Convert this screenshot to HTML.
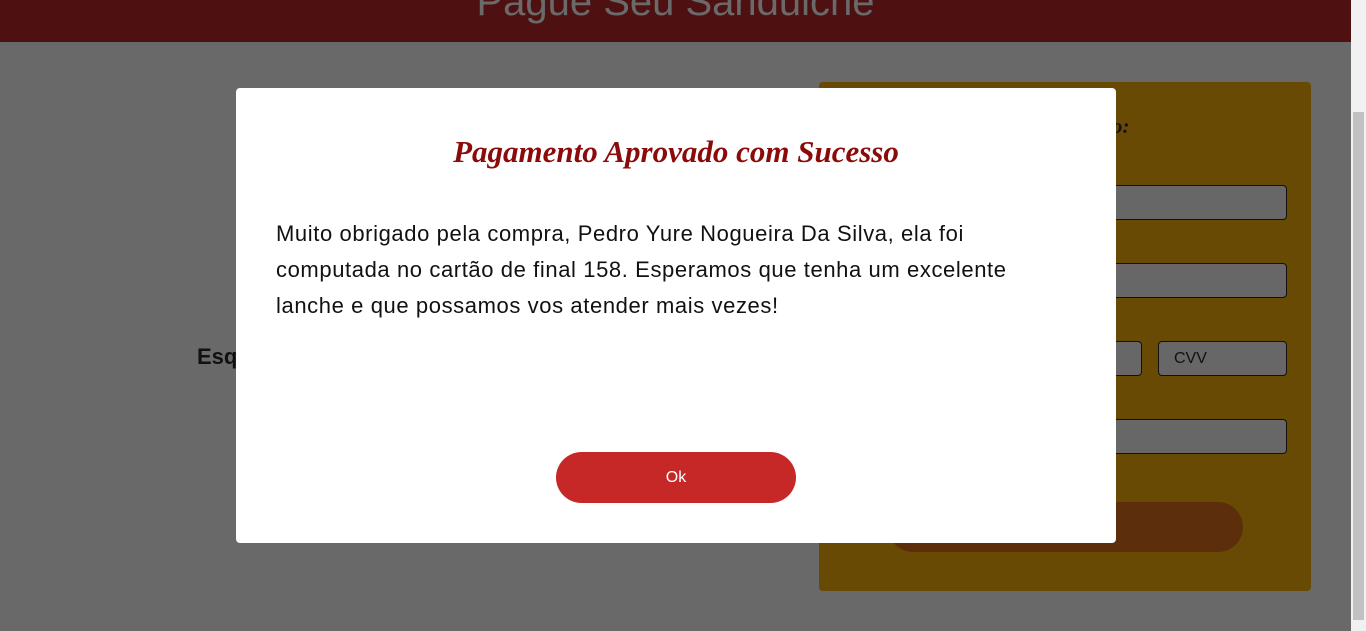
<!DOCTYPE html>
<html><head><meta charset="utf-8"><style>
*{margin:0;padding:0;box-sizing:border-box}
body{width:1366px;height:631px;overflow:hidden;background:#696969;position:relative;font-family:"Liberation Sans",sans-serif}
.hdr{position:absolute;left:0;top:0;width:1351px;height:42px;background:#4f1011;overflow:hidden}
.hdr div{position:absolute;left:0;width:1351px;top:-20px;text-align:center;color:#6a6a6a;font-size:40px}
.sb{position:absolute;left:1351px;top:0;width:15px;height:631px;background:#f1f1f1}
.sb .th{position:absolute;left:2px;top:112px;width:11px;height:508px;background:#c1c1c1}
.panel{position:absolute;left:819px;top:82px;width:492px;height:509px;background:#684a04;border-radius:4px}
.in{position:absolute;background:#676767;border:1px solid #111;border-radius:4px}
.pill{position:absolute;left:888px;top:502px;width:355px;height:50px;background:#5c2e0b;border-radius:25px}
.esq{position:absolute;left:197px;top:344px;font-weight:bold;font-size:22px;color:#111}
.modal{position:absolute;left:236px;top:88px;width:880px;height:455px;background:#fff;border-radius:4px}
.title{position:absolute;left:0;width:880px;top:46px;text-align:center;font-family:"Liberation Serif",serif;font-style:italic;font-weight:bold;font-size:31px;color:#8b0a0a}
.txt{position:absolute;left:40px;top:128px;font-size:22px;letter-spacing:0.6px;line-height:36px;color:#111;white-space:nowrap}
.ok{position:absolute;left:320px;top:364px;width:240px;height:51px;background:#c62828;border-radius:26px;color:#fff;font-size:16px;text-align:center;line-height:51px}
</style></head><body>
<div class="hdr"><div>Pague Seu Sanduiche</div></div>
<div class="panel"></div>
<div style="position:absolute;left:1112px;top:114px;font-family:'Liberation Serif',serif;font-style:italic;font-weight:bold;font-size:21px;color:#111">o:</div>
<div class="in" style="left:1060px;top:185px;width:227px;height:35px"></div>
<div class="in" style="left:1060px;top:263px;width:227px;height:35px"></div>
<div class="in" style="left:1060px;top:341px;width:82px;height:35px"></div>
<div class="in" style="left:1158px;top:341px;width:129px;height:35px;font-size:16px;line-height:33px;padding-left:15px;color:#111">CVV</div>
<div class="in" style="left:1060px;top:419px;width:227px;height:35px"></div>
<div class="pill"></div>
<div class="esq">Esq</div>
<div class="modal">
<div class="title">Pagamento Aprovado com Sucesso</div>
<div class="txt">Muito obrigado pela compra, Pedro Yure Nogueira Da Silva, ela foi<br>computada no cartão de final 158. Esperamos que tenha um excelente<br>lanche e que possamos vos atender mais vezes!</div>
<div class="ok">Ok</div>
</div>
<div class="sb"><div class="th"></div></div>
</body></html>
